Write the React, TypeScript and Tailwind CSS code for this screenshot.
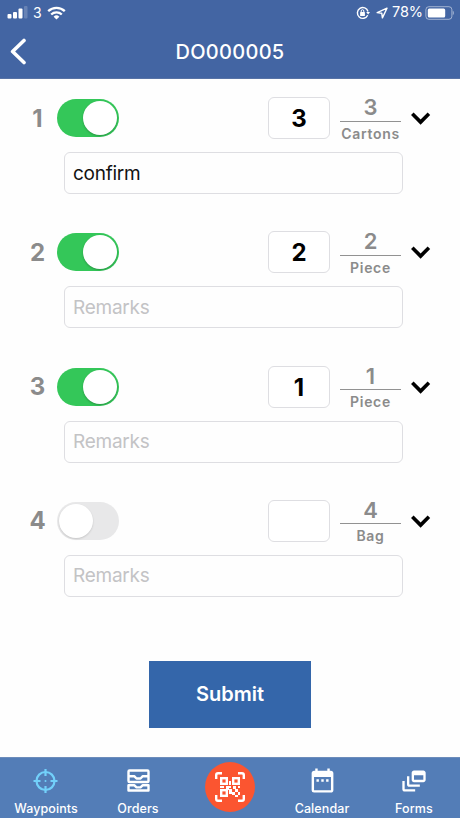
import { MdDateRange, MdDynamicFeed } from "react-icons/md";

type Item = {
  id: number;
  confirmed: boolean;
  entered: string;
  quantity: number;
  unit: string;
  remarks: string;
};

const items: Item[] = [
  { id: 1, confirmed: true, entered: "3", quantity: 3, unit: "Cartons", remarks: "confirm" },
  { id: 2, confirmed: true, entered: "2", quantity: 2, unit: "Piece", remarks: "" },
  { id: 3, confirmed: true, entered: "1", quantity: 1, unit: "Piece", remarks: "" },
  { id: 4, confirmed: false, entered: "", quantity: 4, unit: "Bag", remarks: "" },
];

function StatusBar() {
  return (
    <div className="flex h-[25px] items-center justify-between pl-[7px] pr-[6px] text-[14px] leading-none">
      <div className="flex items-center">
        <svg width="21" height="13" viewBox="0 0 21 13" fill="white">
          <rect x="0.5" y="8" width="4" height="4.5" rx="1" />
          <rect x="6" y="6" width="4" height="6.5" rx="1" />
          <rect x="11.5" y="2.5" width="4" height="10" rx="1" />
          <rect x="17" y="0" width="3.5" height="12.5" rx="1" opacity="0.2" />
        </svg>
        <span className="ml-[5px]">3</span>
        <svg className="ml-[5px]" width="19" height="14" viewBox="0 0 19 14" fill="none" stroke="white" strokeWidth="2.3">
          <path d="M1.2 5.2a12 12 0 0 1 16.6 0" />
          <path d="M4.2 8.5a7.6 7.6 0 0 1 10.6 0" />
          <path d="M9.5 13.5 6.6 10.7a4.2 4.2 0 0 1 5.8 0Z" fill="white" stroke="none" />
        </svg>
      </div>
      <div className="flex items-center">
        <svg width="14" height="14" viewBox="0 0 14 14" fill="none" stroke="white" strokeWidth="1.4">
          <path d="M11.7 9.2A5.4 5.4 0 1 1 12 5.5" />
          <path d="m10.2 6 1.9 2.4L14 6Z" fill="white" stroke="none" />
          <rect x="4.1" y="6.1" width="4.8" height="3.8" rx="0.5" fill="white" stroke="none" />
          <path d="M5.2 6.3V5a1.3 1.3 0 0 1 2.6 0v1.3" strokeWidth="1" />
        </svg>
        <svg className="ml-[6px]" width="12" height="12" viewBox="0 0 12 12" fill="none" stroke="white" strokeWidth="1.4" strokeLinejoin="round">
          <path d="M11 1.2 1.2 5.6l4.6.7.6 4.6Z" />
        </svg>
        <span className="ml-[4px] w-[31px] text-[14.5px] tracking-[-0.1px]">78%</span>
        <svg className="ml-[2px]" width="29" height="14" viewBox="0 0 29 14">
          <rect x="0.9" y="0.7" width="26" height="12.6" rx="3" fill="none" stroke="white" strokeOpacity="0.5" />
          <rect x="2.8" y="2.6" width="17.4" height="8.8" rx="1.5" fill="white" />
          <path d="M27.8 4.8c1.4.6 1.4 3.8 0 4.4Z" fill="white" fillOpacity="0.5" />
        </svg>
      </div>
    </div>
  );
}

function Toggle({ on }: { on: boolean }) {
  return (
    <span
      role="switch"
      aria-checked={on}
      className={`flex h-[38px] w-[62px] items-center rounded-full px-[2px] ${
        on ? "justify-end bg-[#34c759]" : "justify-start bg-[#e8e8e9]"
      }`}
    >
      <span
        className={`h-[34px] w-[34px] rounded-full bg-white ${
          on ? "shadow-[0_1px_2px_rgba(0,0,0,0.25)]" : "shadow-[0_1px_2px_rgba(0,0,0,0.15)]"
        }`}
      />
    </span>
  );
}

function ItemRow({ item }: { item: Item }) {
  return (
    <section className="h-[134.2px]">
      <div className="flex h-[42px] items-center">
        <span className="ml-[24px] w-[27px] pt-px text-center text-[24px] font-bold text-[#8b8b8b]">
          {item.id}
        </span>
        <div className="ml-[6px]">
          <Toggle on={item.confirmed} />
        </div>
        <div className="ml-[149px] flex h-[42px] w-[62px] items-center justify-center rounded-[6px] border border-[#dedee2] bg-white pt-[2px] text-[24px] font-bold text-black">
          {item.entered}
        </div>
        <div className="ml-[10px] flex w-[61px] flex-col items-center pt-px text-[#8b8b8b]">
          <span className="flex h-[23px] items-center text-[22px] font-semibold leading-none">
            {item.quantity}
          </span>
          <span className="mt-[2px] h-px w-full bg-[#929292]" />
          <span className="mt-[3px] whitespace-nowrap text-[14px] font-semibold leading-[17px] tracking-[0.7px]">
            {item.unit}
          </span>
        </div>
        <svg className="ml-[10px] mt-px" width="20" height="13" viewBox="0 0 20 13" fill="none" stroke="black" strokeWidth="3.6">
          <path d="m1.3 1.8 8.3 8.3 8.3-8.3" />
        </svg>
      </div>
      <div
        className={`ml-[64px] mt-[13px] flex h-[42px] w-[339px] items-center rounded-[6px] border border-[#dedee2] px-[8px] pt-px text-[19px] tracking-[-0.25px] ${
          item.remarks ? "text-[#111]" : "text-[#c3c3c5]"
        }`}
      >
        {item.remarks || "Remarks"}
      </div>
    </section>
  );
}

function CrosshairIcon() {
  return (
    <svg width="26" height="26" viewBox="0 0 26 26" fill="none" stroke="#72d0fa" strokeWidth="2.2">
      <circle cx="12.5" cy="13" r="9" />
      <path d="M12.5 1v7M12.5 18v7M.5 13h7M17.5 13h7" />
      <circle cx="12.5" cy="13" r="1" fill="#72d0fa" stroke="none" />
    </svg>
  );
}

// two stacked inbox trays, the upper one taller
function TraysIcon() {
  return (
    <svg width="23" height="23" viewBox="0 0 23 23" fill="none" stroke="white" strokeWidth="2.4" strokeLinejoin="round">
      <rect x="1.5" y="1.5" width="20" height="11.5" rx="1" />
      <path d="M2 7.2h5.2l2.3 2.3h4l2.3-2.3H21" />
      <path d="M1.5 16.2h5.7l2.3 2.2h4l2.3-2.2h5.7v5.3h-20Z" />
    </svg>
  );
}

function QrScanIcon() {
  return (
    <svg width="30" height="30" viewBox="0 0 30 30" fill="none" stroke="white" strokeWidth="2.4">
      <path d="M1.2 7V3A1.8 1.8 0 0 1 3 1.2h4M23 1.2h4A1.8 1.8 0 0 1 28.8 3v4M28.8 23v4a1.8 1.8 0 0 1-1.8 1.8h-4M7 28.8H3A1.8 1.8 0 0 1 1.2 27v-4" />
      <rect x="6.2" y="6.2" width="5.6" height="5.6" />
      <rect x="18.2" y="6.2" width="5.6" height="5.6" />
      <rect x="6.2" y="18.2" width="5.6" height="5.6" />
      <path
        d="M14 9h2v4h-2zM5 14h4v2H5zM11 14h5v2h-2v2h-3zM18 14h3v3h-3zM23 14h2v2h-2zM14 17h3v5h-3zM20 17h3v3h-3zM17 20h3v3h-3zM23 20h2v3h-2zM20 23h3v2h-3z"
        fill="white"
        stroke="none"
      />
    </svg>
  );
}

function Tab({ icon, label }: { icon: React.ReactNode; label: string }) {
  return (
    <div className="flex w-[92px] flex-col items-center pt-[9px]">
      <div className="flex h-[27px] items-center justify-center">{icon}</div>
      <span className="mt-[7px] text-[12.5px] font-medium leading-4 tracking-[0.1px]">{label}</span>
    </div>
  );
}

export default function App() {
  return (
    <main className="flex h-[818px] w-[460px] flex-col overflow-hidden bg-[#fefefe] font-['Inter','Liberation_Sans',sans-serif]">
      <header className="h-[79px] shrink-0 border-b border-[#5873a6] bg-[#4365a3] text-white">
        <StatusBar />
        <div className="grid h-[53px] grid-cols-[1fr_auto_1fr] items-center">
          <svg className="ml-[9px]" width="18" height="27" viewBox="0 0 18 27" fill="none" stroke="white" strokeWidth="3.6" strokeLinecap="round" strokeLinejoin="round">
            <path d="M15 2.5 3.6 13.5l11.4 11" />
          </svg>
          <h1 className="text-[20px] font-medium leading-none tracking-[0.3px]">DO000005</h1>
        </div>
      </header>

      <div className="flex-1 pt-[18.3px]">
        {items.map((item) => (
          <ItemRow key={item.id} item={item} />
        ))}
        <button className="mx-auto mt-[26.7px] block h-[67px] w-[162px] bg-[#3466aa] text-[20px] font-semibold text-white">
          Submit
        </button>
      </div>

      <nav className="flex h-[61px] shrink-0 border-t border-[#6c8cbb] bg-[#537db7] text-white">
        <Tab icon={<CrosshairIcon />} label="Waypoints" />
        <Tab icon={<TraysIcon />} label="Orders" />
        <div className="flex w-[92px] justify-center pt-[4px]">
          <div className="flex h-[50px] w-[50px] items-center justify-center rounded-full bg-[#fb5530]">
            <QrScanIcon />
          </div>
        </div>
        <Tab icon={<MdDateRange size={29} />} label="Calendar" />
        <Tab icon={<MdDynamicFeed size={28} />} label="Forms" />
      </nav>
    </main>
  );
}
